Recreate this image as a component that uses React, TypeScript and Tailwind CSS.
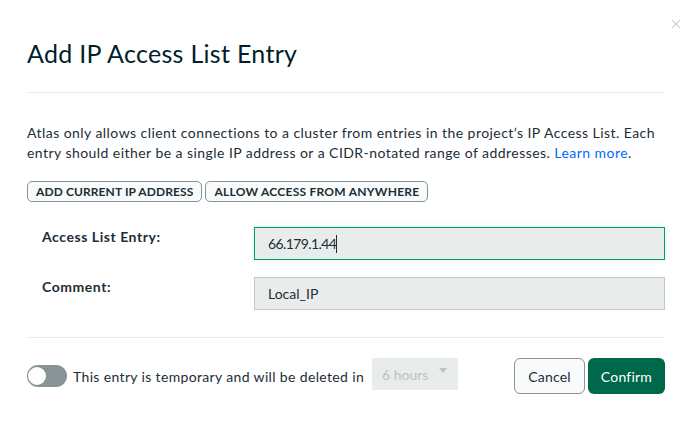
import React from "react";

const font = { fontFamily: "Lato, 'Open Sans', sans-serif" };

function Toggle() {
  return (
    <div className="relative w-[40px] h-[22px] rounded-full bg-[#889397] shrink-0">
      <div className="absolute left-[1px] top-[2px] w-[18px] h-[18px] rounded-full bg-white" />
    </div>
  );
}

function FieldRow({ label, value, focused }: { label: string; value: string; focused?: boolean }) {
  return (
    <div className="flex items-start">
      <div className="w-[227px] pl-[15px] text-[14px] leading-[20px] font-bold tracking-[0.55px] text-[#1c2d38]">
        {label}
      </div>
      <div
        className={
          focused
            ? "flex-1 h-[33px] flex items-center px-[13px] bg-[#e8edeb] border border-[#00a35c] shadow-[0_0_6px_rgba(0,163,92,0.15)]"
            : "flex-1 h-[33px] flex items-center px-[13px] bg-[#e8edeb] border border-[#c1c7c6]"
        }
      >
        <span className={focused ? "text-[14px] tracking-[-0.6px] text-[#1c2d38]" : "text-[14px] text-[#1c2d38]"}>
          {value}
        </span>
        {focused && <span className="w-px h-[18px] bg-[#1c2d38]" />}
      </div>
    </div>
  );
}

export default function App() {
  return (
    <div className="relative w-[695px] h-[423px] bg-white pl-[27px] pr-[30px]" style={font}>
      <button className="absolute top-[18px] right-[13px] w-[12px] h-[12px] flex items-center justify-center">
        <svg width="10" height="10" viewBox="0 0 10 10">
          <path d="M1 1 L9 9 M9 1 L1 9" stroke="#d3d6d6" strokeWidth="1.4" />
        </svg>
      </button>

      <h1 className="pt-[37px] text-[25px] leading-[32px] tracking-[0.3px] text-[#001e2b]">Add IP Access List Entry</h1>
      <div className="mt-[23px] h-px bg-[#e8edeb]" />

      <p className="mt-[30px] text-[14px] leading-[20px] tracking-[0.45px] text-[#1c2d38] whitespace-nowrap">
        Atlas only allows client connections to a cluster from entries in the project’s IP Access List. Each
        <br />
        entry should either be a single IP address or a CIDR-notated range of addresses.{" "}
        <span className="text-[#016bf8]">Learn more</span>.
      </p>

      <div className="mt-[18px] flex gap-[3px]">
        <button className="h-[21px] px-[8px] rounded-[5px] border border-[#889397] bg-[#f9fbfa] text-[12px] font-bold uppercase tracking-[0.1px] text-[#1c2d38] leading-none">
          Add current IP address
        </button>
        <button className="h-[21px] px-[8px] rounded-[5px] border border-[#889397] bg-[#f9fbfa] text-[12px] font-bold uppercase tracking-[0.25px] text-[#1c2d38] leading-none">
          Allow access from anywhere
        </button>
      </div>

      <div className="mt-[25px] flex flex-col gap-[17px]">
        <FieldRow label="Access List Entry:" value="66.179.1.44" focused />
        <FieldRow label="Comment:" value="Local_IP" />
      </div>

      <div className="mt-[27px] h-px bg-[#e8edeb]" />

      <div className="mt-[20px] flex items-center">
        <Toggle />
        <span className="ml-[6px] text-[14px] tracking-[0.35px] text-[#1c2d38]">
          This entry is temporary and will be deleted in
        </span>
        <div className="ml-[8px] w-[86px] h-[32px] -mt-[4px] bg-[#e8edeb] flex items-center justify-between pl-[10px] pr-[11px]">
          <span className="text-[14px] text-[#b8c4c2]">6 hours</span>
          <svg width="8" height="6" viewBox="0 0 8 6" className="-mt-[6px]">
            <path d="M0 0 H8 L4 5 Z" fill="#b8c4c2" />
          </svg>
        </div>
        <div className="ml-auto flex gap-[3px]">
          <button className="h-[36px] px-[13px] rounded-[6px] border border-[#889397] bg-[#f9fbfa] text-[14px] tracking-[0.2px] text-[#1c2d38]">
            Cancel
          </button>
          <button className="h-[36px] px-[13px] rounded-[6px] bg-[#00684a] text-[14px] tracking-[0.2px] text-white">
            Confirm
          </button>
        </div>
      </div>
    </div>
  );
}
